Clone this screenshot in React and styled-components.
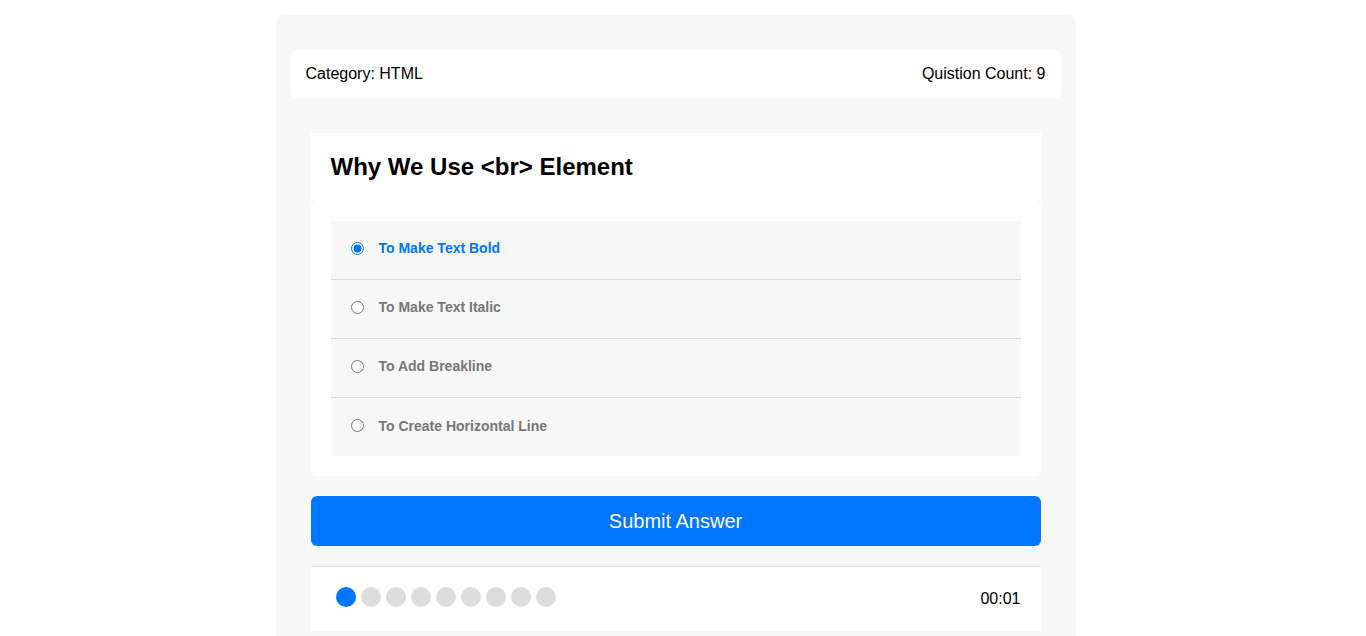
import React, { useState } from 'react';
import styled, { createGlobalStyle } from 'styled-components';

const GlobalStyle = createGlobalStyle`
  * {
    box-sizing: border-box;
  }

  body {
    margin: 0;
    /* room the classic scrollbar takes in the reference */
    padding-right: 15px;
    font-family: 'Liberation Sans', Arial, sans-serif;
    background: #fff;
  }
`;

const Wrapper = styled.div`
  width: 800px;
  margin: 15px auto;
  padding: 35px 15px 194px;
  background: #f7f7f7;
  border-radius: 8px;
`;

const InfoBar = styled.div`
  display: flex;
  justify-content: space-between;
  align-items: center;
  padding: 15px;
  background: #fff;
  border-radius: 6px;
  font-size: 16px;
  line-height: 18px;
  color: #000;
`;

const QuizArea = styled.div`
  margin: 35px 20px 0;
`;

const Title = styled.h2`
  margin: 0;
  padding: 20px;
  background: #fff;
  font-size: 24px;
  line-height: 28px;
  font-weight: bold;
  color: #000;
`;

const Answers = styled.div`
  padding: 20px;
  background: #fff;
  border-radius: 6px;
`;

const Answer = styled.label`
  display: flex;
  align-items: center;
  gap: 15px;
  height: ${props => (props.last ? '58px' : '59px')};
  padding: 0 0 ${props => (props.last ? '3px' : '4px')} 20px;
  background: #f7f7f7;
  border-bottom: ${props => (props.last ? 'none' : '1px solid #ddd')};
  font-size: 14px;
  font-weight: bold;
  color: ${props => (props.active ? '#0075ff' : '#777')};
  cursor: pointer;

  input {
    margin: 0;
    width: 13px;
    height: 13px;
    cursor: pointer;
  }
`;

const SubmitButton = styled.button`
  display: block;
  width: 100%;
  height: 50px;
  margin-top: 20px;
  border: none;
  border-radius: 6px;
  background: #0075ff;
  color: #fff;
  font-family: 'Liberation Sans', Arial, sans-serif;
  font-size: 20px;
  cursor: pointer;
`;

const Footer = styled.div`
  display: flex;
  justify-content: space-between;
  align-items: center;
  margin-top: 20px;
  padding: 20px 20px 24px 25px;
  background: #fff;
  border-top: 1px solid #ddd;
`;

const Bullets = styled.div`
  display: flex;
  gap: 5px;
`;

const Bullet = styled.span`
  width: 20px;
  height: 20px;
  border-radius: 50%;
  background: ${props => (props.on ? '#0075ff' : '#ddd')};
`;

const Timer = styled.div`
  font-size: 16px;
  line-height: 20px;
  padding-top: 2px;
  margin-bottom: -2px;
  color: #000;
`;

const answers = [
  'To Make Text Bold',
  'To Make Text Italic',
  'To Add Breakline',
  'To Create Horizontal Line',
];

const App = () => {
  const [picked, setPicked] = useState(0);

  return (
    <>
      <GlobalStyle />
      <Wrapper>
        <InfoBar>
          <span>Category: HTML</span>
          <span>Quistion Count: 9</span>
        </InfoBar>

        <QuizArea>
          <Title>Why We Use &lt;br&gt; Element</Title>
          <Answers>
            {answers.map((text, i) => (
              <Answer
                key={text}
                active={picked === i}
                last={i === answers.length - 1}
              >
                <input
                  type="radio"
                  name="question"
                  checked={picked === i}
                  onChange={() => setPicked(i)}
                />
                {text}
              </Answer>
            ))}
          </Answers>

          <SubmitButton type="button">Submit Answer</SubmitButton>

          <Footer>
            <Bullets>
              {Array.from({ length: 9 }).map((_, i) => (
                <Bullet key={i} on={i === 0} />
              ))}
            </Bullets>
            <Timer>00:01</Timer>
          </Footer>
        </QuizArea>
      </Wrapper>
    </>
  );
};

export default App;
